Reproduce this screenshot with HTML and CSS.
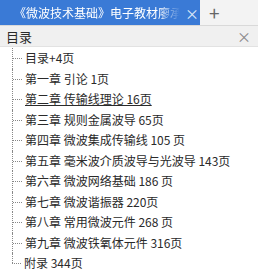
FILE: index.html
```html
<!DOCTYPE html>
<html lang="zh">
<head>
    <meta charset="UTF-8">
    <meta name="viewport" content="width=device-width, initial-scale=1.0">
    <title>目录</title>
    <link rel="stylesheet" href="styles.css">
</head>
<body>
    <div class="tabbar">
        <div class="tab">
            <span class="tab-title">《微波技术基础》电子教材廖承</span>
            <span class="tab-close">×</span>
        </div>
        <span class="tab-add">+</span>
    </div>

    <div class="panel-head">
        <span>目录</span>
        <span class="panel-close">×</span>
    </div>

    <ul class="toc">
        <li>目录+4页</li>
        <li>第一章 引论 1页</li>
        <li class="current">第二章 传输线理论 16页</li>
        <li>第三章 规则金属波导 65页</li>
        <li>第四章 微波集成传输线 105 页</li>
        <li>第五章 毫米波介质波导与光波导 143页</li>
        <li>第六章 微波网络基础 186 页</li>
        <li>第七章 微波谐振器 220页</li>
        <li>第八章 常用微波元件 268 页</li>
        <li>第九章 微波铁氧体元件 316页</li>
        <li class="last">附录 344页</li>
    </ul>
</body>
</html>
```

FILE: styles.css
```css
body {
    margin: 0;
    font-family: "Noto Sans CJK SC", "Liberation Sans", sans-serif;
    font-size: 12px;
    color: #2a2a2a;
    background: #fff;
    width: 258px;
    height: 273px;
    overflow: hidden;
}

.tabbar {
    display: flex;
    align-items: center;
    height: 25px;
    background: #f3f3f3;
    border-bottom: 1px solid #d9d9d9;
}

.tab {
    display: flex;
    align-items: center;
    width: 200px;
    height: 25px;
    background: #3a7ad6;
    color: #fff;
    padding-left: 14px;
    box-sizing: border-box;
}

.tab-title {
    flex: none;
    width: 166px;
    white-space: nowrap;
    overflow: hidden;
    line-height: 25px;
    -webkit-mask-image: linear-gradient(to right, #000 88%, transparent);
    mask-image: linear-gradient(to right, #000 88%, transparent);
}

.tab-close {
    margin-left: 5px;
    font-size: 14px;
    color: #dfe9f8;
}

.tab-add {
    margin-left: 9px;
    font-size: 19px;
    color: #666;
    line-height: 25px;
}

.panel-head {
    display: flex;
    justify-content: space-between;
    align-items: center;
    height: 20px;
    padding: 0 7px 0 6px;
    font-size: 13px;
    background: #f0f0f0;
    border-bottom: 1px solid #e2e2e2;
}

.panel-close {
    font-size: 14px;
    color: #888;
}

.toc {
    list-style: none;
    margin: 1px 0 0 12px;
    padding: 0;
}

.toc li {
    position: relative;
    height: 20.5px;
    line-height: 20.5px;
    padding-left: 12px;
    white-space: nowrap;
    border-left: 1px dotted #888;
}

.toc li::before {
    content: "";
    position: absolute;
    left: 0;
    top: 10px;
    width: 9px;
    border-top: 1px dotted #888;
}

.toc li.last {
    border-left: none;
}

.toc li.last::after {
    content: "";
    position: absolute;
    left: 0;
    top: 0;
    height: 10px;
    border-left: 1px dotted #888;
}

.toc .current {
    text-decoration: underline;
}
```
